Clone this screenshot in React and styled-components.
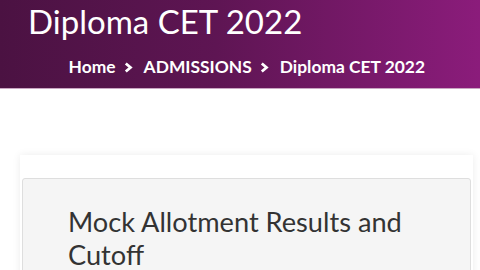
import React from 'react';
import styled, { createGlobalStyle } from 'styled-components';

const GlobalStyle = createGlobalStyle`
body {
  margin: 0;
  background: #fff;
  font-family: Lato, 'Open Sans', sans-serif;
  overflow: hidden;
}
`;

const Banner = styled.header`
height: 88px;
background: linear-gradient(90deg, #4b1242 0%, #5e1553 45%, #8b1c7b 100%);
border-bottom: 1px solid #c9a6c2;
display: flex;
flex-direction: column;
padding: 0 28px;
box-sizing: content-box;
`;

const Title = styled.h1`
margin: 0;
color: #fff;
font-weight: 400;
font-size: 33px;
line-height: 42px;
`;

const Crumbs = styled.nav`
display: flex;
align-items: center;
justify-content: flex-end;
margin-top: 14px;
padding-right: 27px;
color: #fff;
font-weight: 700;
font-size: 17.4px;
`;

const Crumb = styled.span`
white-space: nowrap;
`;

const Arrow = styled.svg`
width: 9px;
height: 11px;
margin: 1px 11px 0 8px;
flex-shrink: 0;
`;

const Main = styled.main`
padding: 66px 7px 0 20px;
`;

const Card = styled.section`
background: #fff;
box-shadow: 0 0 8px rgba(0, 0, 0, 0.08);
padding: 23px 2px 0 2px;
`;

const Panel = styled.div`
background: #f5f5f5;
border: 1px solid #dedede;
border-radius: 3px;
padding: 26px 45px 20px;
`;

const Heading = styled.h2`
margin: 0;
color: #333;
font-weight: 400;
font-size: 27.2px;
line-height: 33px;
`;

const Sep = () => (
  <Arrow viewBox="0 0 9 11" aria-hidden="true">
    <polyline points="1.8,1.5 6.5,5.5 1.8,9.5" fill="none" stroke="#fff" strokeWidth="2.8" strokeLinejoin="miter" />
  </Arrow>
);

export default function App() {
  return (
    <>
      <GlobalStyle />
      <Banner>
        <Title>Diploma CET 2022</Title>
        <Crumbs>
          <Crumb>Home</Crumb>
          <Sep />
          <Crumb>ADMISSIONS</Crumb>
          <Sep />
          <Crumb>Diploma CET 2022</Crumb>
        </Crumbs>
      </Banner>
      <Main>
        <Card>
          <Panel>
            <Heading>Mock Allotment Results and Cutoff</Heading>
          </Panel>
        </Card>
      </Main>
    </>
  );
}
